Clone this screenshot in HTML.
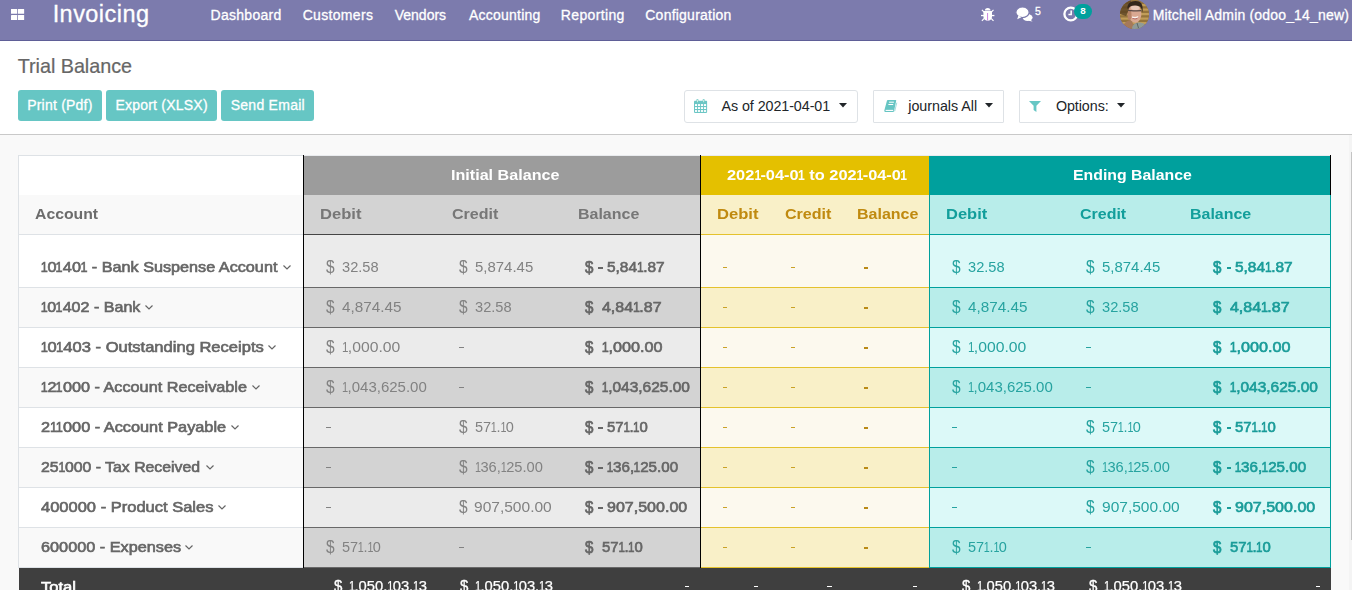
<!DOCTYPE html>
<html><head><meta charset="utf-8"><title>Trial Balance</title>
<style>
html,body{margin:0;padding:0;width:1352px;height:590px;overflow:hidden;background:#f9f9f9;}
.root{width:1352px;height:590px;overflow:hidden;position:relative;background:#f9f9f9;font-family:"Liberation Sans",sans-serif;}
.t{position:absolute;white-space:pre;line-height:1;display:block;transform-origin:0 0;}
.t i{font-style:normal;display:inline-block;transform:scaleX(0.74);margin:0 -0.095em;}
.s i{transform:scaleX(0.78);margin:0 -0.08em;}
.b{position:absolute;}
svg{position:absolute;overflow:visible;}
</style></head><body><div class="root">
<nav>
<div class="b" style="left:0px;top:0px;width:1352px;height:40px;background:#7c7bad;"></div>
<div class="b" style="left:0px;top:40px;width:1352px;height:1px;background:#5f5e97;"></div>
<svg style="left:10.900px;top:9px" width="14" height="12" viewBox="0 0 14 12"><g fill="#fff"><rect x="0" y="0" width="6.200" height="4.850" rx=".3"/><rect x="6.950" y="0" width="6.200" height="4.850" rx=".3"/><rect x="0" y="6.100" width="6.200" height="4.900" rx=".3"/><rect x="6.950" y="6.100" width="6.200" height="4.900" rx=".3"/></g></svg>
<span class="t" style="left:52.63px;top:3.21px;font-size:23.5px;color:#fff;-webkit-text-stroke:0.3px #fff;letter-spacing:0.454px;">Invoicing</span>
<span class="t" style="left:210.55px;top:8.15px;font-size:14.0px;color:#fff;-webkit-text-stroke:0.3px #fff;letter-spacing:0.283px;">Dashboard</span>
<span class="t" style="left:302.69px;top:8.15px;font-size:14.0px;color:#fff;-webkit-text-stroke:0.3px #fff;letter-spacing:0.317px;">Customers</span>
<span class="t" style="left:394.74px;top:8.15px;font-size:14.0px;color:#fff;-webkit-text-stroke:0.3px #fff;">Vendors</span>
<span class="t" style="left:468.97px;top:8.15px;font-size:14.0px;color:#fff;-webkit-text-stroke:0.3px #fff;letter-spacing:0.229px;">Accounting</span>
<span class="t" style="left:560.85px;top:8.15px;font-size:14.0px;color:#fff;-webkit-text-stroke:0.3px #fff;letter-spacing:0.343px;">Reporting</span>
<span class="t" style="left:645.29px;top:8.15px;font-size:14.0px;color:#fff;-webkit-text-stroke:0.3px #fff;letter-spacing:0.229px;">Configuration</span>
<svg style="left:981px;top:8px" width="14" height="14" viewBox="0 0 14 14"><g fill="#fff"><path d="M3.900 2.500a2.800 2.500 0 0 1 5.600 0z"/><path d="M2.400 3.100h8.600v5.300a4.300 4.400 0 0 1-8.600 0z"/><rect x="0" y="6.900" width="13.400" height="1.300"/></g><g stroke="#fff" stroke-width="1.200"><path d="M.9 1.900l2.200 2.200M12.500 1.900l-2.200 2.200M.9 12.900l2.400-2.500M12.500 12.900l-2.400-2.500"/></g><rect x="6.350" y="5" width=".7" height="7.400" fill="#b44fd6"/></svg>
<svg style="left:1016px;top:7.2px" width="17" height="15" viewBox="0 0 17 15"><g fill="#fff"><ellipse cx="11.600" cy="10.600" rx="5" ry="3.500"/><path d="M14.200 12.600l2.400 1.900-4.400-.8z"/><ellipse cx="6.500" cy="5.300" rx="6.600" ry="5.300" stroke="#7c7bad" stroke-width="1.100"/><path d="M2.400 8.600L1.200 12.200l4.200-2z"/></g></svg>
<span class="t" style="left:1034.88px;top:6.01px;font-size:10.5px;color:#fff;-webkit-text-stroke:0.3px #fff;">5</span>
<svg style="left:1063px;top:6px" width="16" height="16" viewBox="0 0 16 16"><circle cx="7.8" cy="8" r="6.400" fill="none" stroke="#fff" stroke-width="2.300"/><path d="M8.2 4.4v4.2H5.4" fill="none" stroke="#fff" stroke-width="1.5"/></svg>
<div class="b" style="left:1074px;top:4px;width:18px;height:15px;background:#00a09d;border-radius:8px;"></div>
<span class="t" style="left:1080.19px;top:6.00px;font-size:9.8px;color:#fff;font-weight:700;">8</span>
<svg style="left:1120px;top:-0.5px" width="29" height="29" viewBox="0 0 29 29"><defs><clipPath id="av"><circle cx="14.500" cy="14.500" r="14.500"/></clipPath><filter id="bl" x="-10%" y="-10%" width="120%" height="120%"><feGaussianBlur stdDeviation=".7"/></filter></defs><g clip-path="url(#av)"><rect width="29" height="29" fill="#8a6a36"/><g filter="url(#bl)"><rect width="29" height="29" fill="#94733a"/><g fill="#c09c58"><rect x="0" y="4" width="29" height="2.200"/><rect x="0" y="8.500" width="29" height="2.200"/><rect x="0" y="13" width="29" height="2.200"/><rect x="0" y="17.500" width="29" height="2.200"/><rect x="0" y="22" width="29" height="2.200"/></g><path d="M0 0h11v7L6 16 0 14z" fill="#5e4526" opacity=".85"/><path d="M2 29c1-6 5-8.500 9-9l5 9z" fill="#a5795a"/><path d="M12 29c0-4 3-6.500 7-6.500s7 2 8.500 6.500z" fill="#8f9b97"/><path d="M17 23l1.500 5" stroke="#5c6664" stroke-width="1"/><ellipse cx="14.800" cy="13.500" rx="6.600" ry="9.200" fill="#d9a892" transform="rotate(-6 14.800 13.500)"/><ellipse cx="15.300" cy="7.800" rx="4.400" ry="2.400" fill="#e8c8ba"/><ellipse cx="9.500" cy="15" rx="2" ry="5" fill="#b88468"/><path d="M7.500 9C7 4 10 1 15.500 1S23.500 4 22.500 12.500c-.7-3-1.300-4.600-2.500-5.900C16 5 10.500 4.300 7.500 9z" fill="#33261f"/><path d="M8 10.300l5.500 .6h3l5-.2" stroke="#5a4c48" stroke-width="1.200" fill="none"/><path d="M11.300 17q3.800 2.800 7.600-.4q-1.200 2.800-3.900 2.800t-3.700-2.400z" fill="#b8706a"/><path d="M12 17.100q3.200 1.700 6.200-.3q-3 1-6.200 .3z" fill="#fff" stroke="#fff" stroke-width=".7"/></g></g></svg>
<span class="t" style="left:1152.65px;top:8.15px;font-size:14.0px;color:#fff;-webkit-text-stroke:0.3px #fff;letter-spacing:0.178px;">Mitchell Admin (odoo_14_new)</span>
</nav>
<header>
<div class="b" style="left:0px;top:41px;width:1352px;height:93px;background:#fff;"></div>
<div class="b" style="left:0px;top:134px;width:1352px;height:1px;background:#c9c9c9;"></div>
<span class="t" style="left:17.66px;top:56.64px;font-size:19.8px;color:#666;-webkit-text-stroke:0.2px #666;letter-spacing:-0.027px;">Trial Balance</span>
<div class="b" style="left:18px;top:90px;width:84px;height:31px;background:#66c6c4;border-radius:3px;"></div>
<span class="t" style="left:27.15px;top:98.25px;font-size:14.0px;color:#fff;-webkit-text-stroke:0.3px #fff;letter-spacing:0.220px;">Print (Pdf)</span>
<div class="b" style="left:106px;top:90px;width:111px;height:31px;background:#66c6c4;border-radius:3px;"></div>
<span class="t" style="left:115.45px;top:98.25px;font-size:14.0px;color:#fff;-webkit-text-stroke:0.3px #fff;letter-spacing:0.220px;">Export (XLSX)</span>
<div class="b" style="left:221px;top:90px;width:93px;height:31px;background:#66c6c4;border-radius:3px;"></div>
<span class="t" style="left:230.66px;top:98.25px;font-size:14.0px;color:#fff;-webkit-text-stroke:0.3px #fff;letter-spacing:0.275px;">Send Email</span>
<div class="b" style="left:683.5px;top:90px;width:172.5px;height:31px;background:#fff;border:1px solid #dee2e6;border-radius:3px;"></div>
<div class="b" style="left:872.5px;top:90px;width:129.5px;height:31px;background:#fff;border:1px solid #dee2e6;border-radius:1px;"></div>
<div class="b" style="left:1018.5px;top:90px;width:115.5px;height:31px;background:#fff;border:1px solid #dee2e6;border-radius:1px 3px 3px 1px;"></div>
<span class="t" style="left:721.47px;top:99.10px;font-size:14.3px;color:#212529;letter-spacing:-0.065px;">As of 2021-04-01</span>
<span class="t" style="left:908.25px;top:99.10px;font-size:14.3px;color:#212529;letter-spacing:-0.021px;">journals All</span>
<span class="t" style="left:1055.92px;top:99.10px;font-size:14.3px;color:#212529;letter-spacing:-0.067px;">Options:</span>
<svg style="left:839.3px;top:103px" width="8" height="5" viewBox="0 0 8 5"><path d="M0 0h8L4 4.600z" fill="#212529"/></svg>
<svg style="left:984.8px;top:103px" width="8" height="5" viewBox="0 0 8 5"><path d="M0 0h8L4 4.600z" fill="#212529"/></svg>
<svg style="left:1117px;top:103px" width="8" height="5" viewBox="0 0 8 5"><path d="M0 0h8L4 4.600z" fill="#212529"/></svg>
<svg style="left:694px;top:99px" width="14" height="14" viewBox="0 0 14 14"><g fill="#6cc6c5"><rect x="0" y="1.800" width="13.100" height="12.100" rx=".8"/><rect x="2.500" y="0" width="1.900" height="3.800" rx=".8"/><rect x="8.700" y="0" width="1.900" height="3.800" rx=".8"/></g><g fill="#d8f5e4"><rect x="3" y=".7" width=".9" height="2.500"/><rect x="9.200" y=".7" width=".9" height="2.500"/></g><g fill="#fff"><rect x="1" y="5.100" width="2.100" height="1.900"/><rect x="4" y="5.100" width="2.100" height="1.900"/><rect x="7" y="5.100" width="2.100" height="1.900"/><rect x="10" y="5.100" width="2.100" height="1.900"/><rect x="1" y="8.100" width="2.100" height="1.900"/><rect x="4" y="8.100" width="2.100" height="1.900"/><rect x="7" y="8.100" width="2.100" height="1.900"/><rect x="10" y="8.100" width="2.100" height="1.900"/><rect x="1" y="11.100" width="2.100" height="1.800"/><rect x="4" y="11.100" width="2.100" height="1.800"/><rect x="7" y="11.100" width="2.100" height="1.800"/><rect x="10" y="11.100" width="2.100" height="1.800"/></g></svg>
<svg style="left:883.8px;top:100px" width="14" height="12" viewBox="0 0 14 12"><path d="M3.800 0h7.900q.7 0 .5.700L10 11.300q-.2.700-.9.700H1.300Q-.1 12 .3 10.600L3 .6Q3.200 0 3.800 0z" fill="#66c5c3"/><path d="M12.800 2.700L10.700 11.300" stroke="#66c5c3" stroke-width=".6" fill="none"/><path d="M5.100 2.200h4.800M4.400 4.500h4.800" stroke="#fff" stroke-width="1"/><path d="M1.600 10.400h7.600" stroke="#fff" stroke-width="1.100"/></svg>
<svg style="left:1028.700px;top:100.8px" width="12" height="11" viewBox="0 0 12 11"><path d="M0 0h12L7.400 4.800V11L4.600 9V4.800z" fill="#66c6c4"/></svg>
</header>
<main>
<div class="b" style="left:1349px;top:135px;width:3px;height:455px;background:#f4f4f4;"></div>
<div class="b" style="left:1351px;top:152px;width:1px;height:388px;background:#c4c4c4;"></div>
<div class="b" style="left:18px;top:155px;width:286px;height:40px;background:#fff;"></div>
<div class="b" style="left:18px;top:195px;width:286px;height:39px;background:#f9f9f9;"></div>
<div class="b" style="left:18px;top:234px;width:286px;height:1px;background:#dee2e6;"></div>
<div class="b" style="left:18px;top:155px;width:1px;height:413px;background:#dee2e6;"></div>
<div class="b" style="left:18px;top:155px;width:286px;height:1px;background:#dee2e6;"></div>
<div class="b" style="left:304px;top:155px;width:1027px;height:1px;background:#e9ebee;"></div>
<div class="b" style="left:304px;top:156px;width:397px;height:39px;background:#9c9c9c;"></div>
<div class="b" style="left:701px;top:156px;width:228px;height:39px;background:#e4c000;"></div>
<div class="b" style="left:929px;top:156px;width:402px;height:39px;background:#00a09d;"></div>
<div class="b" style="left:304px;top:195px;width:397px;height:39px;background:#d3d3d3;"></div>
<div class="b" style="left:701px;top:195px;width:228px;height:39px;background:#f9f0c8;"></div>
<div class="b" style="left:929px;top:195px;width:402px;height:39px;background:#b8edea;"></div>
<div class="b" style="left:304px;top:234px;width:397px;height:1px;background:#444;"></div>
<div class="b" style="left:701px;top:234px;width:228px;height:1px;background:#e4c22d;"></div>
<div class="b" style="left:929px;top:234px;width:402px;height:1px;background:#00a09d;"></div>
<div class="b" style="left:19px;top:235px;width:285px;height:52px;background:#fff;"></div>
<div class="b" style="left:304px;top:235px;width:397px;height:52px;background:#ebebeb;"></div>
<div class="b" style="left:701px;top:235px;width:228px;height:52px;background:#fcf9ee;"></div>
<div class="b" style="left:929px;top:235px;width:402px;height:52px;background:#dcf9f8;"></div>
<div class="b" style="left:19px;top:287px;width:285px;height:40px;background:#f9f9f9;"></div>
<div class="b" style="left:304px;top:287px;width:397px;height:40px;background:#d3d3d3;"></div>
<div class="b" style="left:701px;top:287px;width:228px;height:40px;background:#f9f0c8;"></div>
<div class="b" style="left:929px;top:287px;width:402px;height:40px;background:#b8edea;"></div>
<div class="b" style="left:19px;top:327px;width:285px;height:40px;background:#fff;"></div>
<div class="b" style="left:304px;top:327px;width:397px;height:40px;background:#ebebeb;"></div>
<div class="b" style="left:701px;top:327px;width:228px;height:40px;background:#fcf9ee;"></div>
<div class="b" style="left:929px;top:327px;width:402px;height:40px;background:#dcf9f8;"></div>
<div class="b" style="left:19px;top:367px;width:285px;height:40px;background:#f9f9f9;"></div>
<div class="b" style="left:304px;top:367px;width:397px;height:40px;background:#d3d3d3;"></div>
<div class="b" style="left:701px;top:367px;width:228px;height:40px;background:#f9f0c8;"></div>
<div class="b" style="left:929px;top:367px;width:402px;height:40px;background:#b8edea;"></div>
<div class="b" style="left:19px;top:407px;width:285px;height:40px;background:#fff;"></div>
<div class="b" style="left:304px;top:407px;width:397px;height:40px;background:#ebebeb;"></div>
<div class="b" style="left:701px;top:407px;width:228px;height:40px;background:#fcf9ee;"></div>
<div class="b" style="left:929px;top:407px;width:402px;height:40px;background:#dcf9f8;"></div>
<div class="b" style="left:19px;top:447px;width:285px;height:40px;background:#f9f9f9;"></div>
<div class="b" style="left:304px;top:447px;width:397px;height:40px;background:#d3d3d3;"></div>
<div class="b" style="left:701px;top:447px;width:228px;height:40px;background:#f9f0c8;"></div>
<div class="b" style="left:929px;top:447px;width:402px;height:40px;background:#b8edea;"></div>
<div class="b" style="left:19px;top:487px;width:285px;height:40px;background:#fff;"></div>
<div class="b" style="left:304px;top:487px;width:397px;height:40px;background:#ebebeb;"></div>
<div class="b" style="left:701px;top:487px;width:228px;height:40px;background:#fcf9ee;"></div>
<div class="b" style="left:929px;top:487px;width:402px;height:40px;background:#dcf9f8;"></div>
<div class="b" style="left:19px;top:527px;width:285px;height:40px;background:#f9f9f9;"></div>
<div class="b" style="left:304px;top:527px;width:397px;height:40px;background:#d3d3d3;"></div>
<div class="b" style="left:701px;top:527px;width:228px;height:40px;background:#f9f0c8;"></div>
<div class="b" style="left:929px;top:527px;width:402px;height:40px;background:#b8edea;"></div>
<div class="b" style="left:19px;top:287px;width:285px;height:1px;background:#dee2e6;"></div>
<div class="b" style="left:304px;top:287px;width:397px;height:1px;background:#686868;"></div>
<div class="b" style="left:701px;top:287px;width:228px;height:1px;background:#e4c22d;"></div>
<div class="b" style="left:929px;top:287px;width:402px;height:1px;background:#00a09d;"></div>
<div class="b" style="left:19px;top:327px;width:285px;height:1px;background:#dee2e6;"></div>
<div class="b" style="left:304px;top:327px;width:397px;height:1px;background:#686868;"></div>
<div class="b" style="left:701px;top:327px;width:228px;height:1px;background:#e4c22d;"></div>
<div class="b" style="left:929px;top:327px;width:402px;height:1px;background:#00a09d;"></div>
<div class="b" style="left:19px;top:367px;width:285px;height:1px;background:#dee2e6;"></div>
<div class="b" style="left:304px;top:367px;width:397px;height:1px;background:#686868;"></div>
<div class="b" style="left:701px;top:367px;width:228px;height:1px;background:#e4c22d;"></div>
<div class="b" style="left:929px;top:367px;width:402px;height:1px;background:#00a09d;"></div>
<div class="b" style="left:19px;top:407px;width:285px;height:1px;background:#dee2e6;"></div>
<div class="b" style="left:304px;top:407px;width:397px;height:1px;background:#686868;"></div>
<div class="b" style="left:701px;top:407px;width:228px;height:1px;background:#e4c22d;"></div>
<div class="b" style="left:929px;top:407px;width:402px;height:1px;background:#00a09d;"></div>
<div class="b" style="left:19px;top:447px;width:285px;height:1px;background:#dee2e6;"></div>
<div class="b" style="left:304px;top:447px;width:397px;height:1px;background:#686868;"></div>
<div class="b" style="left:701px;top:447px;width:228px;height:1px;background:#e4c22d;"></div>
<div class="b" style="left:929px;top:447px;width:402px;height:1px;background:#00a09d;"></div>
<div class="b" style="left:19px;top:487px;width:285px;height:1px;background:#dee2e6;"></div>
<div class="b" style="left:304px;top:487px;width:397px;height:1px;background:#686868;"></div>
<div class="b" style="left:701px;top:487px;width:228px;height:1px;background:#e4c22d;"></div>
<div class="b" style="left:929px;top:487px;width:402px;height:1px;background:#00a09d;"></div>
<div class="b" style="left:19px;top:527px;width:285px;height:1px;background:#dee2e6;"></div>
<div class="b" style="left:304px;top:527px;width:397px;height:1px;background:#686868;"></div>
<div class="b" style="left:701px;top:527px;width:228px;height:1px;background:#e4c22d;"></div>
<div class="b" style="left:929px;top:527px;width:402px;height:1px;background:#00a09d;"></div>
<div class="b" style="left:19px;top:567px;width:285px;height:1px;background:#dee2e6;"></div>
<div class="b" style="left:304px;top:567px;width:397px;height:1px;background:#686868;"></div>
<div class="b" style="left:701px;top:567px;width:228px;height:1px;background:#e4c22d;"></div>
<div class="b" style="left:929px;top:567px;width:402px;height:1px;background:#00a09d;"></div>
<div class="b" style="left:303px;top:155px;width:1px;height:413px;background:#000;"></div>
<div class="b" style="left:700px;top:155px;width:1px;height:413px;background:#000;"></div>
<div class="b" style="left:929px;top:195px;width:1px;height:373px;background:#00a09d;"></div>
<div class="b" style="left:1330px;top:155px;width:1px;height:40px;background:#000;"></div>
<div class="b" style="left:1330px;top:195px;width:1px;height:373px;background:#00a09d;"></div>
<div class="b" style="left:19px;top:568px;width:1312px;height:22px;background:#3f3f3f;"></div>
<span class="t" style="left:450.52px;top:168.20px;font-size:14.3px;color:#fff;font-weight:700;transform:scaleX(1.1276);">Initial Balance</span>
<span class="t" style="left:727.23px;top:168.20px;font-size:14.3px;color:#fff;font-weight:700;transform:scaleX(1.1465);">202<i>1</i>-04-0<i>1</i> to 202<i>1</i>-04-0<i>1</i></span>
<span class="t" style="left:1072.94px;top:168.20px;font-size:14.3px;color:#fff;font-weight:700;transform:scaleX(1.1075);">Ending Balance</span>
<span class="t" style="left:34.61px;top:207.30px;font-size:14.3px;color:#6c6c6c;font-weight:700;transform:scaleX(1.1029);">Account</span>
<span class="t" style="left:320.09px;top:207.30px;font-size:14.3px;color:#777;font-weight:700;transform:scaleX(1.1583);">Debit</span>
<span class="t" style="left:452.44px;top:207.30px;font-size:14.3px;color:#777;font-weight:700;transform:scaleX(1.1220);">Credit</span>
<span class="t" style="left:578.23px;top:207.30px;font-size:14.3px;color:#777;font-weight:700;transform:scaleX(1.1179);">Balance</span>
<span class="t" style="left:716.89px;top:207.30px;font-size:14.3px;color:#c08a10;font-weight:700;transform:scaleX(1.1612);">Debit</span>
<span class="t" style="left:784.54px;top:207.30px;font-size:14.3px;color:#c08a10;font-weight:700;transform:scaleX(1.1244);">Credit</span>
<span class="t" style="left:857.33px;top:207.30px;font-size:14.3px;color:#c08a10;font-weight:700;transform:scaleX(1.1198);">Balance</span>
<span class="t" style="left:946.30px;top:207.30px;font-size:14.3px;color:#129e9b;font-weight:700;transform:scaleX(1.1526);">Debit</span>
<span class="t" style="left:1080.04px;top:207.30px;font-size:14.3px;color:#129e9b;font-weight:700;transform:scaleX(1.1170);">Credit</span>
<span class="t" style="left:1190.13px;top:207.30px;font-size:14.3px;color:#129e9b;font-weight:700;transform:scaleX(1.1161);">Balance</span>
<span class="t s" style="left:40.80px;top:260.10px;font-size:14.3px;color:#666;-webkit-text-stroke:0.62px #666;transform:scaleX(1.1334);"><i>1</i>0<i>1</i>40<i>1</i> - Bank Suspense Account</span>
<svg style="left:283.0px;top:264.8px" width="8" height="5" viewBox="0 0 8 5"><path d="M.5 .5L4 4 7.500 .5" fill="none" stroke="#666" stroke-width="1.200"/></svg>
<span class="t s" style="left:40.81px;top:300.10px;font-size:14.3px;color:#666;-webkit-text-stroke:0.62px #666;transform:scaleX(1.1234);"><i>1</i>0<i>1</i>402 - Bank</span>
<svg style="left:145.2px;top:304.8px" width="8" height="5" viewBox="0 0 8 5"><path d="M.5 .5L4 4 7.500 .5" fill="none" stroke="#666" stroke-width="1.200"/></svg>
<span class="t s" style="left:40.79px;top:340.10px;font-size:14.3px;color:#666;-webkit-text-stroke:0.62px #666;transform:scaleX(1.1570);"><i>1</i>0<i>1</i>403 - Outstanding Receipts</span>
<svg style="left:268.0px;top:344.8px" width="8" height="5" viewBox="0 0 8 5"><path d="M.5 .5L4 4 7.500 .5" fill="none" stroke="#666" stroke-width="1.200"/></svg>
<span class="t s" style="left:40.80px;top:380.10px;font-size:14.3px;color:#666;-webkit-text-stroke:0.62px #666;transform:scaleX(1.1354);"><i>1</i>2<i>1</i>000 - Account Receivable</span>
<svg style="left:252.0px;top:384.8px" width="8" height="5" viewBox="0 0 8 5"><path d="M.5 .5L4 4 7.500 .5" fill="none" stroke="#666" stroke-width="1.200"/></svg>
<span class="t s" style="left:40.69px;top:420.10px;font-size:14.3px;color:#666;-webkit-text-stroke:0.62px #666;transform:scaleX(1.1401);">2<i>1</i><i>1</i>000 - Account Payable</span>
<svg style="left:231.0px;top:424.8px" width="8" height="5" viewBox="0 0 8 5"><path d="M.5 .5L4 4 7.500 .5" fill="none" stroke="#666" stroke-width="1.200"/></svg>
<span class="t s" style="left:40.71px;top:460.10px;font-size:14.3px;color:#666;-webkit-text-stroke:0.62px #666;transform:scaleX(1.1074);">25<i>1</i>000 - Tax Received</span>
<svg style="left:205.9px;top:464.8px" width="8" height="5" viewBox="0 0 8 5"><path d="M.5 .5L4 4 7.500 .5" fill="none" stroke="#666" stroke-width="1.200"/></svg>
<span class="t" style="left:41.13px;top:500.10px;font-size:14.3px;color:#666;-webkit-text-stroke:0.62px #666;transform:scaleX(1.1539);">400000 - Product Sales</span>
<svg style="left:218.0px;top:504.8px" width="8" height="5" viewBox="0 0 8 5"><path d="M.5 .5L4 4 7.500 .5" fill="none" stroke="#666" stroke-width="1.200"/></svg>
<span class="t" style="left:40.68px;top:540.10px;font-size:14.3px;color:#666;-webkit-text-stroke:0.62px #666;transform:scaleX(1.1377);">600000 - Expenses</span>
<svg style="left:185.3px;top:544.8px" width="8" height="5" viewBox="0 0 8 5"><path d="M.5 .5L4 4 7.500 .5" fill="none" stroke="#666" stroke-width="1.200"/></svg>
<span class="t" style="left:325.83px;top:259.67px;font-size:14.8px;color:#828282;transform:scale(1.0468,1.2);transform-origin:0 52.6%;">$</span>
<span class="t" style="left:341.84px;top:259.67px;font-size:14.8px;color:#828282;transform:scaleX(0.9880);">32.58</span>
<span class="t" style="left:458.63px;top:259.67px;font-size:14.8px;color:#828282;transform:scale(1.0468,1.2);transform-origin:0 52.6%;">$</span>
<span class="t" style="left:474.60px;top:259.67px;font-size:14.8px;color:#828282;transform:scaleX(1.0107);">5,874.45</span>
<span class="t" style="left:584.75px;top:260.10px;font-size:14.3px;color:#666;-webkit-text-stroke:0.62px #666;transform:scale(1.0543,1.2);transform-origin:0 52.6%;">$</span>
<div class="b" style="left:598.4px;top:267.0px;width:4.6px;height:1.6px;background:#666;"></div>
<span class="t s" style="left:607.09px;top:260.10px;font-size:14.3px;color:#666;-webkit-text-stroke:0.62px #666;transform:scaleX(1.0786);">5,84<i>1</i>.87</span>
<span class="t" style="left:951.83px;top:259.67px;font-size:14.8px;color:#27a3a0;transform:scale(1.0468,1.2);transform-origin:0 52.6%;">$</span>
<span class="t" style="left:967.84px;top:259.67px;font-size:14.8px;color:#27a3a0;transform:scaleX(0.9880);">32.58</span>
<span class="t" style="left:1085.83px;top:259.67px;font-size:14.8px;color:#27a3a0;transform:scale(1.0468,1.2);transform-origin:0 52.6%;">$</span>
<span class="t" style="left:1101.80px;top:259.67px;font-size:14.8px;color:#27a3a0;transform:scaleX(1.0107);">5,874.45</span>
<span class="t" style="left:1212.95px;top:260.10px;font-size:14.3px;color:#1a9c99;-webkit-text-stroke:0.62px #1a9c99;transform:scale(1.0543,1.2);transform-origin:0 52.6%;">$</span>
<div class="b" style="left:1226.6px;top:267.0px;width:4.6px;height:1.6px;background:#1a9c99;"></div>
<span class="t s" style="left:1235.29px;top:260.10px;font-size:14.3px;color:#1a9c99;-webkit-text-stroke:0.62px #1a9c99;transform:scaleX(1.0786);">5,84<i>1</i>.87</span>
<div class="b" style="left:722.8px;top:267.0px;width:4.6px;height:1.1px;background:#c9a227;"></div>
<div class="b" style="left:790.8px;top:267.0px;width:4.6px;height:1.1px;background:#c9a227;"></div>
<div class="b" style="left:863.6px;top:267.0px;width:4.6px;height:1.6px;background:#b98a16;"></div>
<span class="t" style="left:325.83px;top:299.67px;font-size:14.8px;color:#828282;transform:scale(1.0468,1.2);transform-origin:0 52.6%;">$</span>
<span class="t" style="left:342.05px;top:299.67px;font-size:14.8px;color:#828282;transform:scaleX(1.0327);">4,874.45</span>
<span class="t" style="left:458.63px;top:299.67px;font-size:14.8px;color:#828282;transform:scale(1.0468,1.2);transform-origin:0 52.6%;">$</span>
<span class="t" style="left:474.64px;top:299.67px;font-size:14.8px;color:#828282;transform:scaleX(0.9880);">32.58</span>
<span class="t" style="left:584.75px;top:300.10px;font-size:14.3px;color:#666;-webkit-text-stroke:0.62px #666;transform:scale(1.0543,1.2);transform-origin:0 52.6%;">$</span>
<span class="t s" style="left:601.84px;top:300.10px;font-size:14.3px;color:#666;-webkit-text-stroke:0.62px #666;transform:scaleX(1.1156);">4,84<i>1</i>.87</span>
<span class="t" style="left:951.83px;top:299.67px;font-size:14.8px;color:#27a3a0;transform:scale(1.0468,1.2);transform-origin:0 52.6%;">$</span>
<span class="t" style="left:968.05px;top:299.67px;font-size:14.8px;color:#27a3a0;transform:scaleX(1.0327);">4,874.45</span>
<span class="t" style="left:1085.83px;top:299.67px;font-size:14.8px;color:#27a3a0;transform:scale(1.0468,1.2);transform-origin:0 52.6%;">$</span>
<span class="t" style="left:1101.84px;top:299.67px;font-size:14.8px;color:#27a3a0;transform:scaleX(0.9880);">32.58</span>
<span class="t" style="left:1212.95px;top:300.10px;font-size:14.3px;color:#1a9c99;-webkit-text-stroke:0.62px #1a9c99;transform:scale(1.0543,1.2);transform-origin:0 52.6%;">$</span>
<span class="t s" style="left:1230.04px;top:300.10px;font-size:14.3px;color:#1a9c99;-webkit-text-stroke:0.62px #1a9c99;transform:scaleX(1.1156);">4,84<i>1</i>.87</span>
<div class="b" style="left:722.8px;top:307.0px;width:4.6px;height:1.1px;background:#c9a227;"></div>
<div class="b" style="left:790.8px;top:307.0px;width:4.6px;height:1.1px;background:#c9a227;"></div>
<div class="b" style="left:863.6px;top:307.0px;width:4.6px;height:1.6px;background:#b98a16;"></div>
<span class="t" style="left:325.83px;top:339.67px;font-size:14.8px;color:#828282;transform:scale(1.0468,1.2);transform-origin:0 52.6%;">$</span>
<span class="t" style="left:341.81px;top:339.67px;font-size:14.8px;color:#828282;transform:scaleX(1.0621);"><i>1</i>,000.00</span>
<div class="b" style="left:459px;top:347.0px;width:4.6px;height:1.1px;background:#828282;"></div>
<span class="t" style="left:584.75px;top:340.10px;font-size:14.3px;color:#666;-webkit-text-stroke:0.62px #666;transform:scale(1.0543,1.2);transform-origin:0 52.6%;">$</span>
<span class="t s" style="left:601.50px;top:340.10px;font-size:14.3px;color:#666;-webkit-text-stroke:0.62px #666;transform:scaleX(1.1319);"><i>1</i>,000.00</span>
<span class="t" style="left:951.83px;top:339.67px;font-size:14.8px;color:#27a3a0;transform:scale(1.0468,1.2);transform-origin:0 52.6%;">$</span>
<span class="t" style="left:967.81px;top:339.67px;font-size:14.8px;color:#27a3a0;transform:scaleX(1.0621);"><i>1</i>,000.00</span>
<div class="b" style="left:1086.2px;top:347.0px;width:4.6px;height:1.1px;background:#27a3a0;"></div>
<span class="t" style="left:1212.95px;top:340.10px;font-size:14.3px;color:#1a9c99;-webkit-text-stroke:0.62px #1a9c99;transform:scale(1.0543,1.2);transform-origin:0 52.6%;">$</span>
<span class="t s" style="left:1229.70px;top:340.10px;font-size:14.3px;color:#1a9c99;-webkit-text-stroke:0.62px #1a9c99;transform:scaleX(1.1319);"><i>1</i>,000.00</span>
<div class="b" style="left:722.8px;top:347.0px;width:4.6px;height:1.1px;background:#c9a227;"></div>
<div class="b" style="left:790.8px;top:347.0px;width:4.6px;height:1.1px;background:#c9a227;"></div>
<div class="b" style="left:863.6px;top:347.0px;width:4.6px;height:1.6px;background:#b98a16;"></div>
<span class="t" style="left:325.83px;top:379.67px;font-size:14.8px;color:#828282;transform:scale(1.0468,1.2);transform-origin:0 52.6%;">$</span>
<span class="t" style="left:341.84px;top:379.67px;font-size:14.8px;color:#828282;transform:scaleX(1.0136);"><i>1</i>,043,625.00</span>
<div class="b" style="left:459px;top:387.0px;width:4.6px;height:1.1px;background:#828282;"></div>
<span class="t" style="left:584.75px;top:380.10px;font-size:14.3px;color:#666;-webkit-text-stroke:0.62px #666;transform:scale(1.0543,1.2);transform-origin:0 52.6%;">$</span>
<span class="t s" style="left:601.53px;top:380.10px;font-size:14.3px;color:#666;-webkit-text-stroke:0.62px #666;transform:scaleX(1.0832);"><i>1</i>,043,625.00</span>
<span class="t" style="left:951.83px;top:379.67px;font-size:14.8px;color:#27a3a0;transform:scale(1.0468,1.2);transform-origin:0 52.6%;">$</span>
<span class="t" style="left:967.84px;top:379.67px;font-size:14.8px;color:#27a3a0;transform:scaleX(1.0136);"><i>1</i>,043,625.00</span>
<div class="b" style="left:1086.2px;top:387.0px;width:4.6px;height:1.1px;background:#27a3a0;"></div>
<span class="t" style="left:1212.95px;top:380.10px;font-size:14.3px;color:#1a9c99;-webkit-text-stroke:0.62px #1a9c99;transform:scale(1.0543,1.2);transform-origin:0 52.6%;">$</span>
<span class="t s" style="left:1229.73px;top:380.10px;font-size:14.3px;color:#1a9c99;-webkit-text-stroke:0.62px #1a9c99;transform:scaleX(1.0832);"><i>1</i>,043,625.00</span>
<div class="b" style="left:722.8px;top:387.0px;width:4.6px;height:1.1px;background:#c9a227;"></div>
<div class="b" style="left:790.8px;top:387.0px;width:4.6px;height:1.1px;background:#c9a227;"></div>
<div class="b" style="left:863.6px;top:387.0px;width:4.6px;height:1.6px;background:#b98a16;"></div>
<div class="b" style="left:326px;top:427.0px;width:4.6px;height:1.1px;background:#828282;"></div>
<span class="t" style="left:458.63px;top:419.67px;font-size:14.8px;color:#828282;transform:scale(1.0468,1.2);transform-origin:0 52.6%;">$</span>
<span class="t" style="left:474.62px;top:419.67px;font-size:14.8px;color:#828282;transform:scaleX(0.9799);">57<i>1</i>.<i>1</i>0</span>
<span class="t" style="left:584.75px;top:420.10px;font-size:14.3px;color:#666;-webkit-text-stroke:0.62px #666;transform:scale(1.0543,1.2);transform-origin:0 52.6%;">$</span>
<div class="b" style="left:598.4px;top:427.0px;width:4.6px;height:1.6px;background:#666;"></div>
<span class="t s" style="left:607.11px;top:420.10px;font-size:14.3px;color:#666;-webkit-text-stroke:0.62px #666;transform:scaleX(1.0407);">57<i>1</i>.<i>1</i>0</span>
<div class="b" style="left:952px;top:427.0px;width:4.6px;height:1.1px;background:#27a3a0;"></div>
<span class="t" style="left:1085.83px;top:419.67px;font-size:14.8px;color:#27a3a0;transform:scale(1.0468,1.2);transform-origin:0 52.6%;">$</span>
<span class="t" style="left:1101.82px;top:419.67px;font-size:14.8px;color:#27a3a0;transform:scaleX(0.9799);">57<i>1</i>.<i>1</i>0</span>
<span class="t" style="left:1212.95px;top:420.10px;font-size:14.3px;color:#1a9c99;-webkit-text-stroke:0.62px #1a9c99;transform:scale(1.0543,1.2);transform-origin:0 52.6%;">$</span>
<div class="b" style="left:1226.6px;top:427.0px;width:4.6px;height:1.6px;background:#1a9c99;"></div>
<span class="t s" style="left:1235.31px;top:420.10px;font-size:14.3px;color:#1a9c99;-webkit-text-stroke:0.62px #1a9c99;transform:scaleX(1.0407);">57<i>1</i>.<i>1</i>0</span>
<div class="b" style="left:722.8px;top:427.0px;width:4.6px;height:1.1px;background:#c9a227;"></div>
<div class="b" style="left:790.8px;top:427.0px;width:4.6px;height:1.1px;background:#c9a227;"></div>
<div class="b" style="left:863.6px;top:427.0px;width:4.6px;height:1.6px;background:#b98a16;"></div>
<div class="b" style="left:326px;top:467.0px;width:4.6px;height:1.1px;background:#828282;"></div>
<span class="t" style="left:458.63px;top:459.67px;font-size:14.8px;color:#828282;transform:scale(1.0468,1.2);transform-origin:0 52.6%;">$</span>
<span class="t" style="left:474.65px;top:459.67px;font-size:14.8px;color:#828282;transform:scaleX(0.9908);"><i>1</i>36,<i>1</i>25.00</span>
<span class="t" style="left:584.75px;top:460.10px;font-size:14.3px;color:#666;-webkit-text-stroke:0.62px #666;transform:scale(1.0543,1.2);transform-origin:0 52.6%;">$</span>
<div class="b" style="left:598.4px;top:467.0px;width:4.6px;height:1.6px;background:#666;"></div>
<span class="t s" style="left:607.05px;top:460.10px;font-size:14.3px;color:#666;-webkit-text-stroke:0.62px #666;transform:scaleX(1.0618);"><i>1</i>36,<i>1</i>25.00</span>
<div class="b" style="left:952px;top:467.0px;width:4.6px;height:1.1px;background:#27a3a0;"></div>
<span class="t" style="left:1085.83px;top:459.67px;font-size:14.8px;color:#27a3a0;transform:scale(1.0468,1.2);transform-origin:0 52.6%;">$</span>
<span class="t" style="left:1101.85px;top:459.67px;font-size:14.8px;color:#27a3a0;transform:scaleX(0.9908);"><i>1</i>36,<i>1</i>25.00</span>
<span class="t" style="left:1212.95px;top:460.10px;font-size:14.3px;color:#1a9c99;-webkit-text-stroke:0.62px #1a9c99;transform:scale(1.0543,1.2);transform-origin:0 52.6%;">$</span>
<div class="b" style="left:1226.6px;top:467.0px;width:4.6px;height:1.6px;background:#1a9c99;"></div>
<span class="t s" style="left:1235.25px;top:460.10px;font-size:14.3px;color:#1a9c99;-webkit-text-stroke:0.62px #1a9c99;transform:scaleX(1.0618);"><i>1</i>36,<i>1</i>25.00</span>
<div class="b" style="left:722.8px;top:467.0px;width:4.6px;height:1.1px;background:#c9a227;"></div>
<div class="b" style="left:790.8px;top:467.0px;width:4.6px;height:1.1px;background:#c9a227;"></div>
<div class="b" style="left:863.6px;top:467.0px;width:4.6px;height:1.6px;background:#b98a16;"></div>
<div class="b" style="left:326px;top:507.0px;width:4.6px;height:1.1px;background:#828282;"></div>
<span class="t" style="left:458.63px;top:499.67px;font-size:14.8px;color:#828282;transform:scale(1.0468,1.2);transform-origin:0 52.6%;">$</span>
<span class="t" style="left:474.47px;top:499.67px;font-size:14.8px;color:#828282;transform:scaleX(1.0494);">907,500.00</span>
<span class="t" style="left:584.75px;top:500.10px;font-size:14.3px;color:#666;-webkit-text-stroke:0.62px #666;transform:scale(1.0543,1.2);transform-origin:0 52.6%;">$</span>
<div class="b" style="left:598.4px;top:507.0px;width:4.6px;height:1.6px;background:#666;"></div>
<span class="t" style="left:606.96px;top:500.10px;font-size:14.3px;color:#666;-webkit-text-stroke:0.62px #666;transform:scaleX(1.1214);">907,500.00</span>
<div class="b" style="left:952px;top:507.0px;width:4.6px;height:1.1px;background:#27a3a0;"></div>
<span class="t" style="left:1085.83px;top:499.67px;font-size:14.8px;color:#27a3a0;transform:scale(1.0468,1.2);transform-origin:0 52.6%;">$</span>
<span class="t" style="left:1101.67px;top:499.67px;font-size:14.8px;color:#27a3a0;transform:scaleX(1.0494);">907,500.00</span>
<span class="t" style="left:1212.95px;top:500.10px;font-size:14.3px;color:#1a9c99;-webkit-text-stroke:0.62px #1a9c99;transform:scale(1.0543,1.2);transform-origin:0 52.6%;">$</span>
<div class="b" style="left:1226.6px;top:507.0px;width:4.6px;height:1.6px;background:#1a9c99;"></div>
<span class="t" style="left:1235.16px;top:500.10px;font-size:14.3px;color:#1a9c99;-webkit-text-stroke:0.62px #1a9c99;transform:scaleX(1.1214);">907,500.00</span>
<div class="b" style="left:722.8px;top:507.0px;width:4.6px;height:1.1px;background:#c9a227;"></div>
<div class="b" style="left:790.8px;top:507.0px;width:4.6px;height:1.1px;background:#c9a227;"></div>
<div class="b" style="left:863.6px;top:507.0px;width:4.6px;height:1.6px;background:#b98a16;"></div>
<span class="t" style="left:325.83px;top:539.67px;font-size:14.8px;color:#828282;transform:scale(1.0468,1.2);transform-origin:0 52.6%;">$</span>
<span class="t" style="left:341.82px;top:539.67px;font-size:14.8px;color:#828282;transform:scaleX(0.9799);">57<i>1</i>.<i>1</i>0</span>
<div class="b" style="left:459px;top:547.0px;width:4.6px;height:1.1px;background:#828282;"></div>
<span class="t" style="left:584.75px;top:540.10px;font-size:14.3px;color:#666;-webkit-text-stroke:0.62px #666;transform:scale(1.0543,1.2);transform-origin:0 52.6%;">$</span>
<span class="t s" style="left:601.61px;top:540.10px;font-size:14.3px;color:#666;-webkit-text-stroke:0.62px #666;transform:scaleX(1.0407);">57<i>1</i>.<i>1</i>0</span>
<span class="t" style="left:951.83px;top:539.67px;font-size:14.8px;color:#27a3a0;transform:scale(1.0468,1.2);transform-origin:0 52.6%;">$</span>
<span class="t" style="left:967.82px;top:539.67px;font-size:14.8px;color:#27a3a0;transform:scaleX(0.9799);">57<i>1</i>.<i>1</i>0</span>
<div class="b" style="left:1086.2px;top:547.0px;width:4.6px;height:1.1px;background:#27a3a0;"></div>
<span class="t" style="left:1212.95px;top:540.10px;font-size:14.3px;color:#1a9c99;-webkit-text-stroke:0.62px #1a9c99;transform:scale(1.0543,1.2);transform-origin:0 52.6%;">$</span>
<span class="t s" style="left:1229.81px;top:540.10px;font-size:14.3px;color:#1a9c99;-webkit-text-stroke:0.62px #1a9c99;transform:scaleX(1.0407);">57<i>1</i>.<i>1</i>0</span>
<div class="b" style="left:722.8px;top:547.0px;width:4.6px;height:1.1px;background:#c9a227;"></div>
<div class="b" style="left:790.8px;top:547.0px;width:4.6px;height:1.1px;background:#c9a227;"></div>
<div class="b" style="left:863.6px;top:547.0px;width:4.6px;height:1.6px;background:#b98a16;"></div>
<span class="t" style="left:41.24px;top:579.80px;font-size:14.3px;color:#fff;-webkit-text-stroke:0.62px #fff;transform:scaleX(1.1595);">Total</span>
<span class="t" style="left:334.46px;top:578.70px;font-size:14.3px;color:#fff;-webkit-text-stroke:0.25px #fff;transform:scale(1.0503,1.2);transform-origin:0 52.6%;">$</span>
<span class="t" style="left:349.38px;top:578.70px;font-size:14.3px;color:#fff;-webkit-text-stroke:0.25px #fff;transform:scaleX(1.0319);"><i>1</i>,050,<i>1</i>03.<i>1</i>3</span>
<span class="t" style="left:460.36px;top:578.70px;font-size:14.3px;color:#fff;-webkit-text-stroke:0.25px #fff;transform:scale(1.0503,1.2);transform-origin:0 52.6%;">$</span>
<span class="t" style="left:475.28px;top:578.70px;font-size:14.3px;color:#fff;-webkit-text-stroke:0.25px #fff;transform:scaleX(1.0319);"><i>1</i>,050,<i>1</i>03.<i>1</i>3</span>
<span class="t" style="left:961.76px;top:578.70px;font-size:14.3px;color:#fff;-webkit-text-stroke:0.25px #fff;transform:scale(1.0503,1.2);transform-origin:0 52.6%;">$</span>
<span class="t" style="left:976.68px;top:578.70px;font-size:14.3px;color:#fff;-webkit-text-stroke:0.25px #fff;transform:scaleX(1.0319);"><i>1</i>,050,<i>1</i>03.<i>1</i>3</span>
<span class="t" style="left:1089.06px;top:578.70px;font-size:14.3px;color:#fff;-webkit-text-stroke:0.25px #fff;transform:scale(1.0503,1.2);transform-origin:0 52.6%;">$</span>
<span class="t" style="left:1103.98px;top:578.70px;font-size:14.3px;color:#fff;-webkit-text-stroke:0.25px #fff;transform:scaleX(1.0319);"><i>1</i>,050,<i>1</i>03.<i>1</i>3</span>
<div class="b" style="left:684.9px;top:585.6px;width:4.6px;height:1.6px;background:#fff;"></div>
<div class="b" style="left:753.7px;top:585.6px;width:4.6px;height:1.6px;background:#fff;"></div>
<div class="b" style="left:827px;top:585.6px;width:4.6px;height:1.6px;background:#fff;"></div>
<div class="b" style="left:912.8px;top:585.6px;width:4.6px;height:1.6px;background:#fff;"></div>
<div class="b" style="left:1315.9px;top:585.6px;width:4.6px;height:1.6px;background:#fff;"></div>
</main>
</div></body></html>
